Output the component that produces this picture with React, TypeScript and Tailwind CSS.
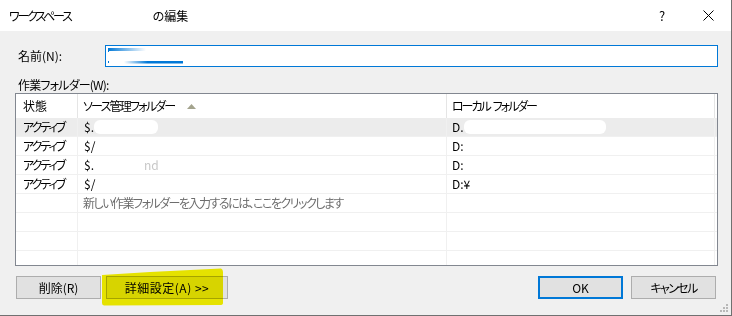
import React from "react";

const font = "font-['Yu_Gothic_UI','Noto_Sans_CJK_JP',sans-serif] [font-feature-settings:'palt']";

type Row = { state: string; src: React.ReactNode; local: React.ReactNode; selected?: boolean };

function Blob({ w }: { w: number }) {
  return <span className="inline-block h-[14px] rounded-[6px] bg-white align-middle" style={{ width: w }} />;
}

export default function App() {
  const rows: Row[] = [
    {
      state: "アクティブ",
      src: (
        <>
          <span>$.</span>
          <Blob w={64} />
        </>
      ),
      local: (
        <>
          <span>D.</span>
          <Blob w={142} />
        </>
      ),
      selected: true,
    },
    {
      state: "アクティブ",
      src: <span>$/</span>,
      local: <span>D:</span>,
    },
    {
      state: "アクティブ",
      src: (
        <>
          <span>$.</span>
          <span className="ml-[50px] text-[#c8c8c8]">nd</span>
        </>
      ),
      local: <span>D:</span>,
    },
    {
      state: "アクティブ",
      src: <span>$/</span>,
      local: <span>D:¥</span>,
    },
  ];

  return (
    <div className={`relative flex h-[316px] w-[732px] flex-col overflow-hidden border-r border-b border-[#707070] bg-[#f0f0f0] text-[12px] text-black ${font}`}>
      {/* タイトルバー */}
      <div className="flex h-[31px] items-center bg-white">
        <div className="flex-1 pl-[9px]">
          <span className="tracking-[-2.2px]">ワークスペース</span>
          <span className="inline-block w-[82px]" />
          <span>の編集</span>
        </div>
        <div className="w-[46px] text-center text-[13px]">?</div>
        <div className="flex w-[46px] items-center justify-center">
          <svg width="11" height="11" viewBox="0 0 11 11">
            <path d="M0.5 0.5 L10.5 10.5 M10.5 0.5 L0.5 10.5" stroke="#000" strokeWidth="1" />
          </svg>
        </div>
      </div>

      <div className="flex flex-1 flex-col pr-[13px] pl-[15px]">
        {/* 名前 */}
        <div className="mt-[14px] flex h-[22px] items-center">
          <div className="w-[90px] pl-[3px]">名前(N):</div>
          <div className="h-[22px] flex-1 border border-[#0078d7] bg-white">
            <svg width="90" height="20" viewBox="0 0 90 20">
              <defs>
                <linearGradient id="g1" x1="0" x2="1">
                  <stop offset="0" stopColor="#0078d7" />
                  <stop offset="1" stopColor="#0078d7" stopOpacity="0" />
                </linearGradient>
                <linearGradient id="g2" x1="0" x2="1">
                  <stop offset="0" stopColor="#0078d7" stopOpacity="0" />
                  <stop offset="0.4" stopColor="#0078d7" />
                  <stop offset="1" stopColor="#0078d7" />
                </linearGradient>
              </defs>
              <rect x="2" y="2" width="38" height="3" fill="url(#g1)" />
              <rect x="2" y="4" width="1" height="2" fill="#0078d7" />
              <rect x="2" y="15" width="1" height="2" fill="#0078d7" />
              <rect x="18" y="15" width="59" height="2.5" fill="url(#g2)" />
            </svg>
          </div>
        </div>

        {/* 作業フォルダー */}
        <div className="mt-[10px] h-[16px] pl-[3px] leading-[16px] tracking-[-0.8px]">作業フォルダー(W):</div>
        <div className="flex h-[173px] flex-col overflow-hidden border border-[#828790] bg-white">
          <div className="flex h-[24px] shrink-0 items-center">
            <div className="flex h-full w-[62px] items-center border-r border-[#e5e5e5] pl-[7px]">状態</div>
            <div className="flex h-full w-[369px] items-center border-r border-[#e5e5e5] pl-[5px]">
              <span className="tracking-[-1.8px]">ソース管理フォルダー</span>
              <svg className="ml-[13px]" width="9" height="5" viewBox="0 0 9 5">
                <path d="M0 5 L4.5 0 L9 5 Z" fill="#a3a38d" />
              </svg>
            </div>
            <div className="flex h-full w-[268px] items-center border-r border-[#e5e5e5] pl-[5px] tracking-[-2px]">
              <span className="whitespace-pre">ローカル </span>
              <span className="ml-[2px]">フォルダー</span>
            </div>
          </div>

          {rows.map((r, i) => (
            <div
              key={i}
              className={`flex h-[19px] shrink-0 border-b border-[#f0f0f0] ${r.selected ? "bg-[#ececec]" : ""}`}
            >
              <div className="flex w-[62px] items-center border-r border-[#f0f0f0] pl-[7px] tracking-[-2px]">{r.state}</div>
              <div className="flex w-[369px] items-center border-r border-[#f0f0f0] pl-[6px]">{r.src}</div>
              <div className="flex w-[268px] items-center border-r border-[#f0f0f0] pl-[5px]">{r.local}</div>
            </div>
          ))}

          <div className="flex h-[19px] shrink-0 border-b border-[#f0f0f0]">
            <div className="w-[62px] border-r border-[#f0f0f0]" />
            <div className="flex w-[369px] items-center border-r border-[#f0f0f0] pl-[5px] tracking-[-1.5px] text-[#6d6d6d]">
              新しい作業フォルダーを入力するには、ここをクリックします
            </div>
            <div className="w-[268px] border-r border-[#f0f0f0]" />
          </div>

          {[0, 1, 2, 3].map((i) => (
            <div key={i} className="flex h-[19px] shrink-0 border-b border-[#f0f0f0]">
              <div className="w-[62px] border-r border-[#f0f0f0]" />
              <div className="w-[369px] border-r border-[#f0f0f0]" />
              <div className="w-[268px] border-r border-[#f0f0f0]" />
            </div>
          ))}
        </div>

        {/* ボタン */}
        <div className="mt-[10px] mr-[2px] ml-[1px] flex h-[23px]">
          <button className="h-[23px] w-[85px] border border-[#adadad] bg-[#e1e1e1]">削除(R)</button>
          <button className="ml-[5px] h-[23px] w-[122px] border border-[#adadad] bg-[#e1e1e1] tracking-[0.5px]">
            詳細設定(A) &gt;&gt;
          </button>
          <div className="flex-1" />
          <button className="h-[23px] w-[85px] border-2 border-[#0078d7] bg-[#e1e1e1]">OK</button>
          <button className="ml-[8px] h-[23px] w-[85px] border border-[#adadad] bg-[#e1e1e1] tracking-[-1.6px]">
            キャンセル
          </button>
        </div>
      </div>

      {/* 蛍光ペンのマーク */}
      <svg className="pointer-events-none absolute top-0 left-0 mix-blend-multiply" width="732" height="316">
        <path d="M102 275 L150 272 L221 268.5 Q223 269 223 272 L223 303 Q223 305 220 305 L104 305.5 Q102 305 102 303 Z" fill="#f4f100" />
      </svg>

      {/* リサイズグリップ */}
      <svg className="absolute right-[2px] bottom-[2px]" width="10" height="10" viewBox="0 0 10 10">
        <g fill="#b8b8b8">
          <rect x="7" y="1" width="2" height="2" />
          <rect x="4" y="4" width="2" height="2" />
          <rect x="7" y="4" width="2" height="2" />
          <rect x="1" y="7" width="2" height="2" />
          <rect x="4" y="7" width="2" height="2" />
          <rect x="7" y="7" width="2" height="2" />
        </g>
      </svg>
    </div>
  );
}
